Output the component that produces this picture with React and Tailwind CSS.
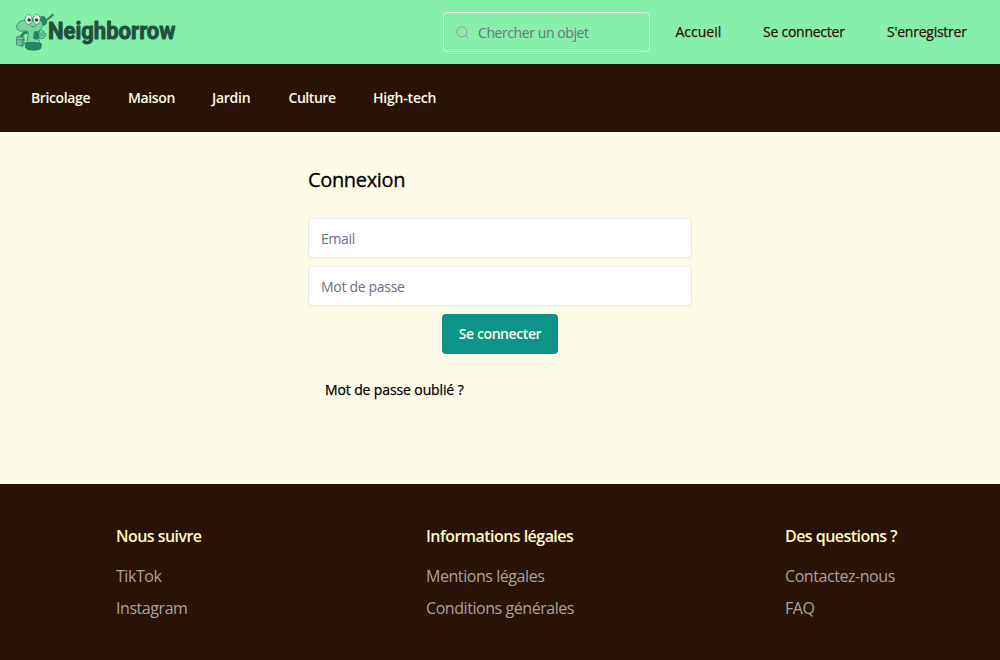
import React from "react";
import { Search } from "lucide-react";

const categories = [
  { label: "Bricolage", box: "w-[97px] tracking-[-0.38px]" },
  { label: "Maison", box: "w-[84px] tracking-[-0.35px]" },
  { label: "Jardin", box: "w-[76.5px] tracking-[-0.25px]" },
  { label: "Culture", box: "w-[84.5px] tracking-[-0.45px]" },
  { label: "High-tech", box: "tracking-[-0.2px]" },
];

const columns = [
  { title: "Nous suivre", links: ["TikTok", "Instagram"], box: "w-[310px]" },
  { title: "Informations légales", links: ["Mentions légales", "Conditions générales"], box: "w-[359px]" },
  { title: "Des questions ?", links: ["Contactez-nous", "FAQ"], box: "w-[150px]" },
];

function Logo() {
  return (
    <svg width="166" height="48" viewBox="14 8 166 48" className="block shrink-0 overflow-visible" aria-label="Neighborrow">
      <g stroke="#2f705a" strokeWidth="0.7" strokeLinecap="round" strokeLinejoin="round">
        <path d="M46 20.5 L48.5 18.5" fill="none" strokeWidth="1.4" />
        <path d="M48.7 18.3 L52.9 14.8" fill="none" strokeWidth="2.2" stroke="#4b7a68" />
        <path d="M40.5 17 Q44 14.5 46.5 19.5 L46.8 22.5 L44.5 25.5 L41.5 24.5 Z" fill="#208865" />
        <path d="M27 20.5 C23 19.5 17.5 21.5 16.7 26 C16.2 31 20 31.6 25 31 C28.6 31 28.6 34 27.8 37 L26.8 44 H40 C38.6 38 37.6 34 39 30.5 C42 29 43 25.5 41.8 21 Z" fill="#72d99d" />
        <path d="M27 32.5 Q23 32 21.8 36" fill="none" strokeWidth="2.6" stroke="#2d8262" />
        <path d="M16.8 37 H24 V45 L22 46.3 L16.8 45 Z" fill="#70c69a" />
        <path d="M16.9 39.8 H24 M18 37 Q20.5 33.5 23.3 37 M22.2 40 V46" fill="none" />
        <path d="M34.5 32 L37.3 31.3 L39 37.5 L37 39.5 L33.8 38.5 Z" fill="#208865" />
        <path d="M38.5 36.5 L41 38.8 Q44.5 38.6 45.8 35.5 Q46.3 32.8 44 33 Q44 29.8 41.8 30.8 Q40.6 28.6 39.5 30.5 Q38.8 32.5 40 34.3 Z" fill="#72d99d" />
        <path d="M40.4 34.3 L43 33 M41 36.3 L44 35" fill="none" />
        <path d="M25.5 43 Q33 41.8 41.3 43.5 L40.8 48.3 Q39 50.2 33 50 Q27 50.2 25.8 47.8 Z" fill="#218966" strokeWidth="1" />
        <ellipse cx="28.7" cy="19.5" rx="3.6" ry="4.8" fill="#f3faf1" />
        <ellipse cx="36.8" cy="19.4" rx="3.6" ry="4.8" fill="#f3faf1" />
        <circle cx="29.1" cy="20" r="1.5" fill="#17392f" />
        <circle cx="36.5" cy="20" r="1.5" fill="#17392f" />
        <path d="M30.8 26 Q33.5 28.4 36 25.8" fill="none" />
      </g>
      <text x="48" y="39.4" fontFamily="Roboto, sans-serif" fontWeight="700" fontSize="23.5" fill="#20513f" stroke="#20513f" strokeWidth="0.9" strokeLinejoin="round" textLength="127.5" lengthAdjust="spacingAndGlyphs">
        Neighborrow
      </text>
    </svg>
  );
}

export default function App() {
  return (
    <div className="flex h-[660px] w-full flex-col overflow-hidden bg-[#fefbe8] font-['Open_Sans','Noto_Sans',sans-serif]">
      <header className="flex h-16 shrink-0 items-center bg-[#86efac] pl-[14px] text-sm text-[#291307]">
        <Logo />
        <label className="ml-[263px] flex h-10 w-[207px] shrink-0 items-center rounded border border-gray-200 pl-[11px]">
          <Search className="size-[15px] shrink-0 text-gray-400" strokeWidth={1.8} />
          <input
            className="ml-2 mt-px w-[150px] bg-transparent tracking-[-0.42px] outline-none placeholder:text-gray-500"
            placeholder="Chercher un objet"
          />
        </label>
        <nav className="flex pl-[25.5px] tracking-[-0.25px] [-webkit-text-stroke:0.25px]">
          <a className="w-[87.5px] tracking-normal">Accueil</a>
          <a className="w-[124px]">Se connecter</a>
          <a>S'enregistrer</a>
        </nav>
      </header>

      <nav className="flex h-[68px] shrink-0 items-center bg-[#291307] pl-[31px] text-sm font-semibold text-[#fefce8]">
        {categories.map((c) => (
          <a key={c.label} className={c.box}>{c.label}</a>
        ))}
      </nav>

      <main className="flex h-[352px] shrink-0 flex-col items-center pt-[34px] text-black">
        <form className="flex w-96 flex-col">
          <h1 className="text-xl leading-7 tracking-[-0.35px] [-webkit-text-stroke:0.3px]">Connexion</h1>
          <input className="mt-6 h-10 rounded border border-gray-200 bg-white px-3 text-sm tracking-[-0.35px] outline-none placeholder:text-gray-500" placeholder="Email" />
          <input className="mt-2 h-10 rounded border border-gray-200 bg-white px-3 text-sm tracking-[-0.3px] outline-none placeholder:text-gray-500" placeholder="Mot de passe" />
          <button type="button" className="mt-2 h-10 w-[116px] self-center rounded bg-[#0d9488] text-sm font-semibold tracking-[-0.42px] text-[#fefce8]">
            Se connecter
          </button>
          <a className="mt-[26px] pl-[17px] text-sm tracking-[-0.12px] [-webkit-text-stroke:0.25px]">Mot de passe oublié ?</a>
        </form>
      </main>

      <footer className="flex flex-1 bg-[#291307] pl-[116px] pt-10">
        {columns.map((col) => (
          <section key={col.title} className={col.box}>
            <h2 className="font-semibold leading-6 tracking-[-0.54px] text-[#fef9c3]">{col.title}</h2>
            <ul className="mt-4 flex flex-col gap-2 tracking-[-0.44px] text-[#a8a29e]">
              {col.links.map((link) => (
                <li key={link} className="leading-6">{link}</li>
              ))}
            </ul>
          </section>
        ))}
      </footer>
    </div>
  );
}
